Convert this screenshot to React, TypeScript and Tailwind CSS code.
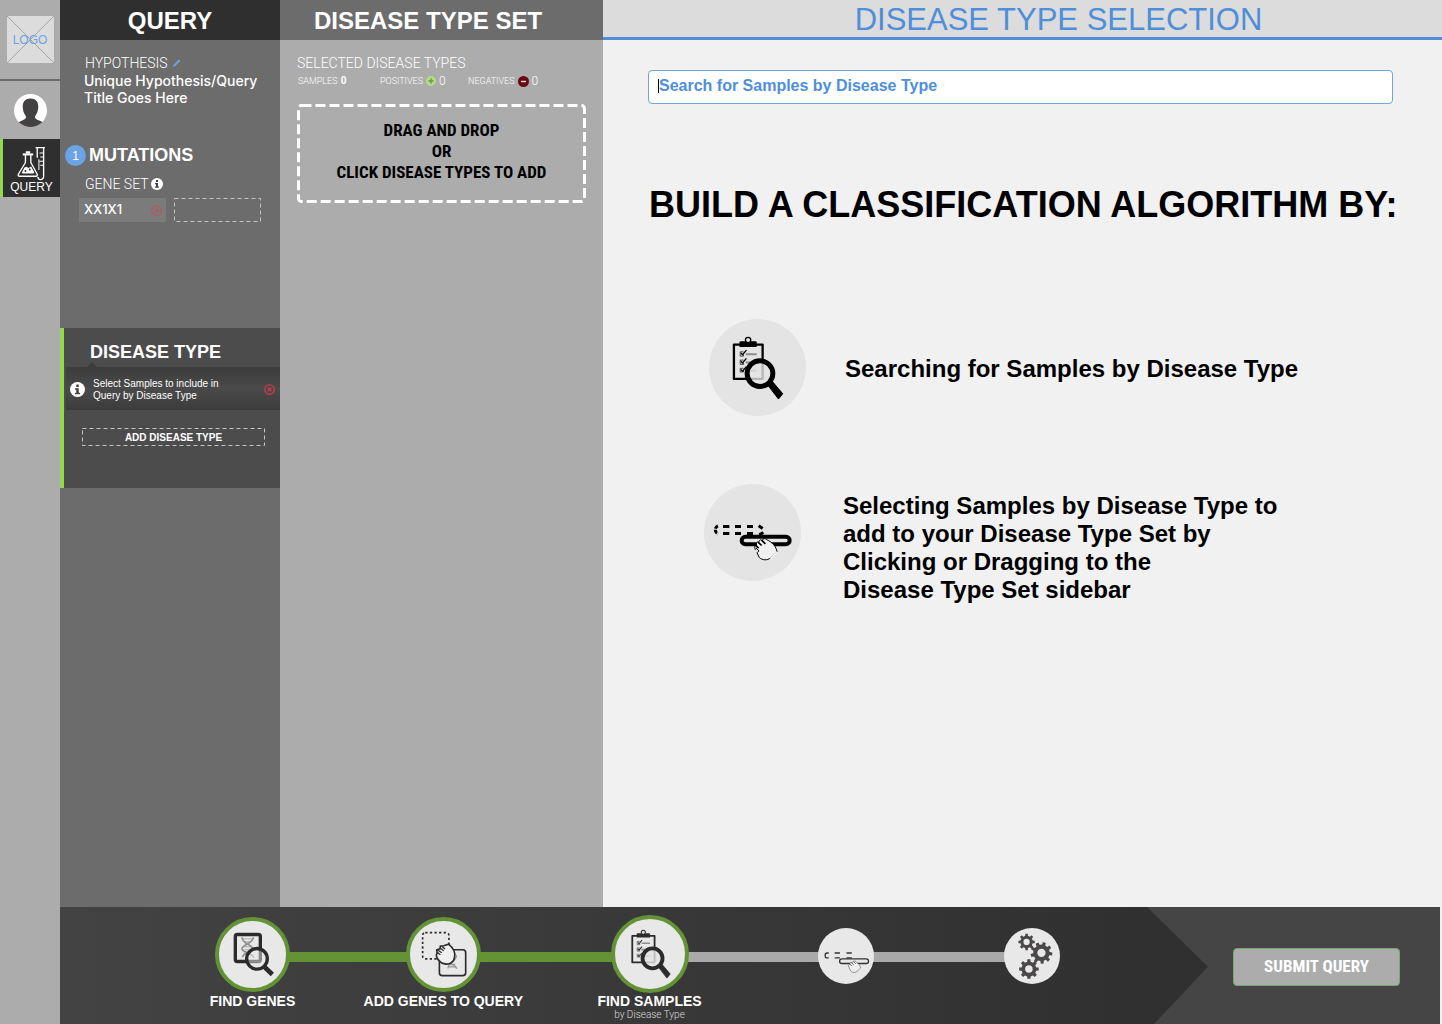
import React from "react";

const sans = "font-['Liberation_Sans',Arial,sans-serif]";
const light = "font-[Roboto,'Liberation_Sans',sans-serif] font-light";
const medium = "font-[Inter,'Liberation_Sans',sans-serif] font-medium";
const narrow = "font-['Liberation_Sans_Narrow','Roboto_Condensed','Liberation_Sans',sans-serif] font-bold";

type IconProps = { className?: string };

function DashedFrame({ width, dash, inset, radius, className = "" }: { width: number; dash: string; inset: string; radius: number; className?: string }) {
  return (
    <svg className={`pointer-events-none absolute inset-0 h-full w-full overflow-visible ${className}`} aria-hidden="true">
      <rect x={inset} y={inset} rx={radius} style={{ width: `calc(100% - ${width}px)`, height: `calc(100% - ${width}px)` }} fill="none" stroke="currentColor" strokeWidth={width} strokeDasharray={dash} />
    </svg>
  );
}

function LogoMark() {
  return (
    <svg viewBox="0 0 47 47" className="absolute inset-0 h-full w-full" aria-hidden="true">
      <path d="M0 0 47 47M47 0 0 47" stroke="#a3a3a3" strokeWidth="1" />
    </svg>
  );
}

function Avatar() {
  return (
    <svg viewBox="42 282 98 98" className="size-[33px]" aria-hidden="true">
      <clipPath id="avatar-disc"><circle cx="91" cy="331" r="49" /></clipPath>
      <circle cx="91" cy="331" r="49" fill="#fff" />
      <path clipPath="url(#avatar-disc)" fill="#434142" d="M91 295c16 0 24 10 23 27-1 12-4 19-9 25-2 8 3 10 10 13 10 4 15 7 20 12v12H48v-12c5-5 10-8 20-12 7-3 11-6 9-13-5-6-8-13-9-25-1-17 7-27 23-27z" />
    </svg>
  );
}

function LabIcon() {
  return (
    <svg viewBox="50 435 86 104" className="h-[35px] w-[29px]" fill="none" stroke="#fff" strokeWidth="4" strokeLinejoin="round" aria-hidden="true">
      <path d="M75 462v22l-21 35q-2 6 4 6h48q6 0 4-6L91 484v-22" />
      <path d="M67 460h31" strokeWidth="6" />
      <path d="M76 454h13" strokeWidth="7" />
      <path d="M72 499l6-2 6 3 8-4 9 17q1 4-4 4H68q-5 0-3-4z" fill="#fff" stroke="none" />
      <circle cx="75" cy="509" r="3" fill="#2f2f2f" stroke="none" />
      <circle cx="88" cy="505" r="3" fill="#2f2f2f" stroke="none" />
      <path d="M105 440h28M110 440v30M129 440v87q-2 8-9 8-7 0-8-8" />
      <path d="M117 456h11M119 468h9M117 480h11M119 492h9M115 474v32" strokeWidth="3" />
    </svg>
  );
}

function InfoIcon({ className = "" }: IconProps) {
  return (
    <svg viewBox="0 0 24 24" className={className} aria-hidden="true">
      <circle cx="12" cy="12" r="12" fill="#fff" />
      <path d="M10 4h4v4h-4zM8 10h6v7h2v2.500H8V17h2v-4.500H8z" fill="#444" />
    </svg>
  );
}

function RemoveIcon({ className = "" }: IconProps) {
  return (
    <svg viewBox="0 0 22 22" className={className} fill="none" stroke="currentColor" strokeWidth="2.500" aria-hidden="true">
      <circle cx="11" cy="11" r="9.500" />
      <path d="m7.500 7.500 7 7m0-7-7 7" />
    </svg>
  );
}

function PencilIcon() {
  return (
    <svg viewBox="0 0 27 27" className="size-[9px]" fill="#6ba3e5" aria-hidden="true">
      <path d="M2 25l3-8L19 3q2-2 4 0t1 4L10 21z" />
    </svg>
  );
}

function SearchListIcon({ className = "" }: IconProps) {
  return (
    <svg viewBox="127 102 156 194" className={className} fill="none" stroke="currentColor" aria-hidden="true">
      <path d="M132 128h87v104h-87z" strokeWidth="7" strokeLinejoin="round" />
      <path d="M149 135v-14q0-3 4-3h44q4 0 4 3v14z" fill="currentColor" stroke="none" />
      <circle cx="175" cy="114" r="8" strokeWidth="4" fill="#e4e4e4" />
      <path d="M168 157h33M168 182h33M168 207h33" stroke="#8c8c8c" strokeWidth="6" />
      <path d="M161 150h-10v13h10v-5M161 175h-10v13h10v-5M161 200h-10v11h10v-5" strokeWidth="2" />
      <path d="m153 153 5 6 12-14M153 178l5 6 12-14M153 203l5 6 12-14" strokeWidth="4" />
      <circle cx="211" cy="216" r="39" fill="#e4e4e4" fillOpacity="0.800" strokeWidth="15" />
      <path d="m234 250 12-13 34 40-13 16z" fill="currentColor" strokeWidth="3" strokeLinejoin="round" />
    </svg>
  );
}

function SelectBarIcon({ className = "" }: IconProps) {
  return (
    <svg viewBox="70 160 240 116" className={className} fill="none" stroke="#000" aria-hidden="true">
      <path d="M85 168q-8 3-8 12t8 12" strokeWidth="9" strokeDasharray="12 3" />
      <path d="M100 170h19M136 170h18M172 170h18M100 191h19M136 191h18M172 191h18M207 168l12 8M209 195l12-7" strokeWidth="9" />
      <rect x="156" y="201" width="144" height="22" rx="11" strokeWidth="12" />
      <path d="M197 240c-4-8 0-15 4-14-3-8 3-12 7-8-1-8 6-10 10-5 1-8 9-8 14-3 14 6 28 20 30 36l-20 18c-8 9-25 7-33-1l-7-14 6-6-9-8" fill="#f1f1f1" strokeWidth="3" strokeLinejoin="round" />
      <path d="m197 226 10 9M205 217l11 10M216 211l11 11" strokeWidth="5" />
      <path d="m262 246-20 20" stroke="#f1f1f1" strokeWidth="5" />
    </svg>
  );
}

function SelectBarThinIcon({ className = "" }: IconProps) {
  return (
    <svg viewBox="68 150 142 70" className={className} fill="none" stroke="#333" strokeWidth="4" aria-hidden="true">
      <path d="M85 156h-5q-6 0-6 8t6 7h5M103 156h16M139 156h16M103 171h16M139 171h16" />
      <rect x="118" y="174" width="88" height="14" rx="7" />
      <path d="M146 198c-3-4 0-8 3-7 0-6 4-8 7-4 3-8 10-8 14-2 7 5 11 10 12 17l-11 10c-8 6-17 3-21-4l-4-10" fill="#eee" stroke="#666" strokeWidth="2" />
      <path d="m149 190 6 5M154 186l7 6M160 182l7 7" strokeWidth="2" />
    </svg>
  );
}

function FindGenesIcon({ className = "" }: IconProps) {
  return (
    <svg viewBox="97 92 126 134" className={className} fill="none" stroke="#2b2b2b" aria-hidden="true">
      <g stroke="#909090" strokeWidth="5">
        <path d="M124 107c0 20 32 22 32 36 0 12-30 10-30 24" />
        <path d="M158 107c0 20-34 22-34 34 0 14 34 12 34 28" />
        <path d="M127 112h28M131 121h19M130 136h20M131 145h19M128 158h12" strokeWidth="2" />
      </g>
      <rect x="104" y="99" width="75" height="81" rx="6" strokeWidth="10" />
      <circle cx="169" cy="172" r="31" fill="#e8e8e8" fillOpacity="0.500" strokeWidth="10" />
      <path d="m190 195 25 24" strokeWidth="14" />
    </svg>
  );
}

function AddGenesIcon({ className = "" }: IconProps) {
  return (
    <svg viewBox="186 94 138 140" className={className} fill="none" stroke="#2b2b2b" strokeWidth="5" aria-hidden="true">
      <rect x="190" y="99" width="80" height="80" rx="8" strokeDasharray="7 7" />
      <rect x="241" y="151" width="80" height="79" rx="9" fill="#e8e8e8" />
      <path d="M293 167c2 20-24 18-26 41M268 187c5 9 22 7 26 22M274 196h15M271 203h18" stroke="#999" strokeWidth="4" />
      <path d="M241 185c-8-7-12-18-7-23l-1-11 10-3 1-8 10-1 15-5c12 10 22 25 18 40-1 15-16 23-29 20-7-1-13-4-17-9z" fill="#f0f0f0" />
      <path d="m233 158 11 8M235 151l13 9M243 146l11 8M249 141l9 8" strokeWidth="4" />
    </svg>
  );
}

function gearPath(cx: number, cy: number, outer: number, teeth: number, turn: number) {
  const root = outer * 0.76;
  const hole = outer * 0.38;
  const step = (Math.PI * 2) / teeth;
  const at = (r: number, a: number) => `${(cx + r * Math.cos(a)).toFixed(1)} ${(cy + r * Math.sin(a)).toFixed(1)}`;
  const points: string[] = [];
  for (let i = 0; i < teeth; i++) {
    const a = i * step + turn;
    points.push(at(root, a - step * 0.28), at(outer, a - step * 0.2), at(outer, a + step * 0.2), at(root, a + step * 0.28));
  }
  return `M${points.join("L")}ZM${cx - hole} ${cy}a${hole} ${hole} 0 1 0 ${hole * 2} 0a${hole} ${hole} 0 1 0 ${-hole * 2} 0Z`;
}

function GearsIcon({ className = "" }: IconProps) {
  return (
    <svg viewBox="654 98 106 142" className={className} fill="#4a4849" fillRule="evenodd" aria-hidden="true">
      <path d={gearPath(680, 125, 25, 8, 0)} />
      <path d={gearPath(725, 158, 33, 9, 0.1)} />
      <path d={gearPath(687, 207, 30, 8, 0)} />
    </svg>
  );
}

function Connector({ done, className }: { done: boolean; className: string }) {
  return (
    <li className={`flex h-[84px] items-center ${className}`} aria-hidden="true">
      <span className={`-mx-1 h-[10px] flex-1 ${done ? "bg-[#649335]" : "bg-[#a9a9a9]"}`} />
    </li>
  );
}

function DoneStep({ label, note, size, children }: { label: string; note?: string; size: string; children: React.ReactNode }) {
  return (
    <li className={`relative z-10 flex flex-col items-center whitespace-nowrap ${size}`}>
      <span className="flex h-[78px] items-center">
        <span className={`flex aspect-square items-center justify-center rounded-full border-4 border-[#649335] bg-[#e8e8e8] pl-[2px] ${size}`}>{children}</span>
      </span>
      <span className="text-sm leading-4 font-bold text-white">{label}</span>
      {note && <span className={`text-[10px] leading-3 text-[#dcdcdc] ${light}`}>{note}</span>}
    </li>
  );
}

function NextStep({ name, children }: { name: string; children: React.ReactNode }) {
  return (
    <li className="relative z-10 flex h-[82px] w-[56px] items-center" aria-label={name}>
      <span className="flex size-[56px] items-center justify-center rounded-full bg-[#e8e8e8]">{children}</span>
    </li>
  );
}

export default function App() {
  return (
    <div className={`flex min-h-screen bg-[#f1f1f1] text-black ${sans}`}>
      <nav className="flex w-[60px] shrink-0 flex-col bg-[#acacac]">
        <div className="flex h-[81px] items-start justify-center border-b-2 border-[#6c6c6c] pt-4">
          <a href="#home" className="relative flex size-[47px] items-center justify-center bg-[#dcdcdc] text-xs text-[#6ba3e5]">
            <LogoMark />
            <span className="relative">LOGO</span>
          </a>
        </div>
        <a href="#profile" aria-label="Profile" className="flex h-[58px] items-center justify-center"><Avatar /></a>
        <a href="#query" className="flex h-[58px] flex-col items-center justify-end border-l-3 border-[#92d94f] bg-[#2f2f2f] pb-1 text-xs leading-3 text-white">
          <LabIcon />
          QUERY
        </a>
      </nav>

      <div className="flex min-w-0 flex-1 flex-col">
        <div className="flex flex-1">
          <aside className="w-[220px] shrink-0 bg-[#6c6c6c] text-white">
            <h2 className="h-10 bg-[#2f2f2f] pt-px text-center text-2xl leading-10 font-bold">QUERY</h2>
            <div className="pt-[14px] pl-6">
              <div className="flex items-center gap-1 pl-px">
                <h3 className={`text-sm leading-[18px] ${light}`}>HYPOTHESIS</h3>
                <button type="button" aria-label="Edit hypothesis"><PencilIcon /></button>
              </div>
              <p className={`text-sm leading-[17px] ${medium}`}>Unique Hypothesis/Query<br />Title Goes Here</p>
            </div>
            <section className="h-[184px] pt-[38px]">
              <div className="flex items-center gap-[3px] pl-[5px]">
                <span className="flex size-[21px] items-center justify-center rounded-full bg-[#6ba3e5] text-xs">1</span>
                <h3 className="text-lg leading-[23px] font-bold">MUTATIONS</h3>
              </div>
              <div className="mt-2 flex items-center gap-[2px] pl-[25px]">
                <h4 className={`text-sm leading-[18px] ${light}`}>GENE SET</h4>
                <InfoIcon className="size-3" />
              </div>
              <div className="mt-[5px] flex gap-2 pl-[19px]">
                <div className="flex h-6 w-[87px] items-center justify-between bg-[#7b7b7b] pr-1 pl-[5px]">
                  <span className={`text-[13px] ${medium}`}>XX1X1</span>
                  <button type="button" aria-label="Remove XX1X1" className="text-[#b25863]"><RemoveIcon className="block size-[11px]" /></button>
                </div>
                <div className="relative h-6 w-[87px] text-[#c4c4c4]"><DashedFrame width={1} dash="4 3" inset="0.5" radius={0} /></div>
              </div>
            </section>

            <section className="mt-[38px] h-40 border-l-4 border-[#92d94f] bg-[#4c4c4c]">
              <h3 className="h-[39px] pt-[14px] pl-[26px] text-lg leading-5 font-bold">DISEASE TYPE</h3>
              <div className="relative ml-[2px] flex h-[43px] items-center bg-linear-to-b from-[#3c3c3c] via-[#4a4a4a] to-[#3c3c3c] pt-[2px] pr-[5px] pl-1">
                <svg viewBox="0 0 12 6" className="absolute -top-[5px] left-[20px] h-[6px] w-3" aria-hidden="true"><path d="M0 6 6 0l6 6z" fill="#3c3c3c" /></svg>
                <InfoIcon className="size-[15px] shrink-0" />
                <p className="ml-2 flex-1 pt-px text-[10px] leading-3">Select Samples to include in<br />Query by Disease Type</p>
                <button type="button" aria-label="Remove disease type" className="text-[#d23a4b]"><RemoveIcon className="block size-[11px]" /></button>
              </div>
              <button type="button" className="relative mt-[18px] ml-[18px] flex h-[18px] w-[183px] items-center justify-center text-[10px] font-bold">
                <DashedFrame width={1} dash="4 3" inset="0.5" radius={0} className="text-[#c4c4c4]" />
                ADD DISEASE TYPE
              </button>
            </section>
          </aside>

          <aside className="w-[323px] shrink-0 bg-[#acacac] text-white">
            <h2 className="h-10 bg-[#6c6c6c] pt-px pl-[34px] text-2xl leading-10 font-bold">DISEASE TYPE SET</h2>
            <div className="px-[17px] pt-[14px]">
              <h3 className={`text-sm leading-[18px] ${light}`}>SELECTED DISEASE TYPES</h3>
              <div className={`flex items-center pl-px text-[9px] leading-[18px] ${light}`}>
                <p className="w-[82px]">SAMPLES <b className="ml-px text-[10px] font-bold">0</b></p>
                <p className="flex w-[88px] items-center gap-[3px]">
                  POSITIVES
                  <svg viewBox="0 0 30 30" className="size-[10px]" aria-hidden="true"><circle cx="15" cy="15" r="15" fill="#b5dc82" /><path d="M15 7v16M7 15h16" stroke="#71915a" strokeWidth="4" /></svg>
                  <span className="text-xs leading-[18px]">0</span>
                </p>
                <p className="flex items-center gap-[3px]">
                  NEGATIVES
                  <svg viewBox="0 0 30 30" className="size-[11px]" aria-hidden="true"><circle cx="15" cy="15" r="15" fill="#6a0713" /><path d="M8 15h14" stroke="#ddd" strokeWidth="4" /></svg>
                  <span className="text-xs leading-[18px]">0</span>
                </p>
              </div>
              <div className={`relative mt-[14px] flex h-[99px] flex-col items-center pt-4 text-[17px] leading-[21px] text-black ${narrow}`}>
                <DashedFrame width={3} dash="10 4" inset="1.5" radius={3} className="text-white" />
                <p>DRAG AND DROP</p>
                <p>OR</p>
                <p>CLICK DISEASE TYPES TO ADD</p>
              </div>
            </div>
          </aside>

          <main className="min-w-0 flex-1">
            <h1 className="h-10 border-b-3 border-[#4f8fda] bg-[#dcdcdc] pl-[72px] text-center text-[31px] leading-10 text-[#4f8fda]">DISEASE TYPE SELECTION</h1>
            <div className="pr-[37px] pl-[45px]">
              <label className="mt-[30px] mr-3 flex h-[34px] items-center rounded-[4px] border border-[#6fa6dc] bg-white pb-[3px] pl-[9px]">
                <span className="h-[14px] w-px bg-black" />
                <input type="text" aria-label="Search for samples" placeholder="Search for Samples by Disease Type" className="min-w-0 flex-1 bg-transparent text-base font-bold text-[#4f8fda] outline-none placeholder:text-[#4f8fda]" />
              </label>
              <h2 className="mt-[81px] pl-px text-4xl leading-10 font-bold whitespace-nowrap">BUILD A CLASSIFICATION ALGORITHM BY:</h2>
              <ul className="mt-[94px] flex flex-col gap-[62px] text-2xl leading-7 font-bold">
                <li className="flex items-center gap-[39px] pl-[61px]">
                  <span className="flex size-[97px] shrink-0 items-center justify-center rounded-full bg-[#e4e4e4]"><SearchListIcon className="h-[64px] w-[52px]" /></span>
                  <p className="pt-[2px]">Searching for Samples by Disease Type</p>
                </li>
                <li className="flex items-start gap-[42px] pl-[56px]">
                  <span className="mt-[6px] flex size-[97px] shrink-0 items-center justify-center rounded-full bg-[#e4e4e4]"><SelectBarIcon className="mt-5 h-[39px] w-[80px]" /></span>
                  <p className="max-w-[450px] pt-[14px]">Selecting Samples by Disease Type to add to your Disease Type Set by Clicking or Dragging to the<br />Disease Type Set sidebar</p>
                </li>
              </ul>
            </div>
          </main>
        </div>

        <footer className="mr-[2px] flex h-[117px] items-center bg-[#454545]">
          <ol className="flex h-full flex-1 bg-linear-to-r from-[#434343] to-[#2f2f2f] pt-2 pr-[148px] pl-[155px] [clip-path:polygon(0_0,calc(100%-61px)_0,100%_51%,calc(100%-54px)_100%,0_100%)]">
            <DoneStep label="FIND GENES" size="w-[75px]"><FindGenesIcon className="h-[45px] w-[42px]" /></DoneStep>
            <Connector done className="flex-[116]" />
            <DoneStep label="ADD GENES TO QUERY" size="w-[75px]"><AddGenesIcon className="size-[46px]" /></DoneStep>
            <Connector done className="flex-[130]" />
            <DoneStep label="FIND SAMPLES" note="by Disease Type" size="w-[78px]"><SearchListIcon className="h-[50px] w-[40px] text-[#2b2b2b]" /></DoneStep>
            <Connector done={false} className="flex-[130]" />
            <NextStep name="Add samples to query"><SelectBarThinIcon className="mt-3 h-[23px] w-[47px]" /></NextStep>
            <Connector done={false} className="flex-[130]" />
            <NextStep name="Process query"><GearsIcon className="ml-[7px] h-[47px] w-[35px]" /></NextStep>
          </ol>
          <button type="button" className={`mt-[2px] mr-10 ml-[25px] h-[38px] w-[167px] rounded-[4px] border border-[#72ab70] bg-[#acacac] text-[17px] text-white ${narrow}`}>SUBMIT QUERY</button>
        </footer>
      </div>
    </div>
  );
}
